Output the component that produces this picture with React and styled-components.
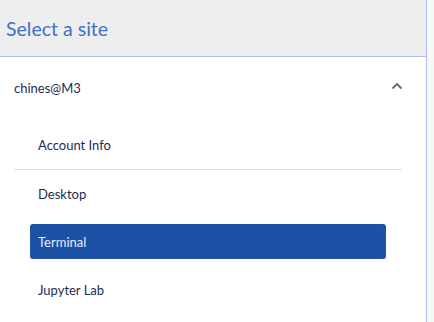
import styled, { createGlobalStyle } from "styled-components";

const GlobalStyle = createGlobalStyle`
  html, body {
    margin: 0;
    padding: 0;
    background-color: #f7f7f7;
    font-family: Lato, "Open Sans", "Liberation Sans", sans-serif;
  }
`;

const Page = styled.div`
  display: flex;
  min-height: 100vh;
`;

const Panel = styled.aside`
  width: 426px;
  min-height: 100vh;
  background-color: #ffffff;
  border-right: 1px solid #a6bfee;
`;

const Header = styled.header`
  height: 56px;
  display: flex;
  align-items: center;
  padding: 0 6px;
  background-color: #eeeeee;
  border-bottom: 1px solid #a6bfee;
`;

const Title = styled.h1`
  margin: 0;
  font-size: 19.5px;
  font-weight: 400;
  color: #3f71c8;
`;

const SiteRow = styled.div`
  height: 62px;
  display: flex;
  align-items: center;
  justify-content: space-between;
  padding: 0 23px 0 14px;
  color: #1f2c4f;
  font-size: 13px;
`;

const Chevron = styled.svg`
  width: 12px;
  height: 8px;
  margin-top: -4px;
`;

const Menu = styled.ul`
  list-style: none;
  margin: 0 24px 0 14px;
  padding: 8px 0 0;
`;

const Item = styled.li`
  height: 35px;
  margin: 0 16px 13px;
  padding: 0 8px;
  display: flex;
  align-items: center;
  border-radius: 3px;
  font-size: 13px;
  color: ${(p) => (p.$active ? "#e6edf8" : "#1f2c4f")};
  background-color: ${(p) => (p.$active ? "#1c51a6" : "transparent")};
`;

const Divider = styled.li`
  height: 1px;
  margin: -6px 0 6px;
  background-color: #dddddd;
`;

const items = ["Desktop", "Terminal", "Jupyter Lab"];

export default function App() {
  return (
    <Page>
      <GlobalStyle />
      <Panel>
        <Header>
          <Title>Select a site</Title>
        </Header>
        <SiteRow>
          <span>chines@M3</span>
          <Chevron viewBox="0 0 12 8">
            <polyline
              points="1.5,6.5 6,2 10.5,6.5"
              fill="none"
              stroke="#666666"
              strokeWidth="1.8"
            />
          </Chevron>
        </SiteRow>
        <Menu>
          <Item>Account Info</Item>
          <Divider />
          {items.map((name) => (
            <Item key={name} $active={name === "Terminal"}>
              {name}
            </Item>
          ))}
        </Menu>
      </Panel>
    </Page>
  );
}
